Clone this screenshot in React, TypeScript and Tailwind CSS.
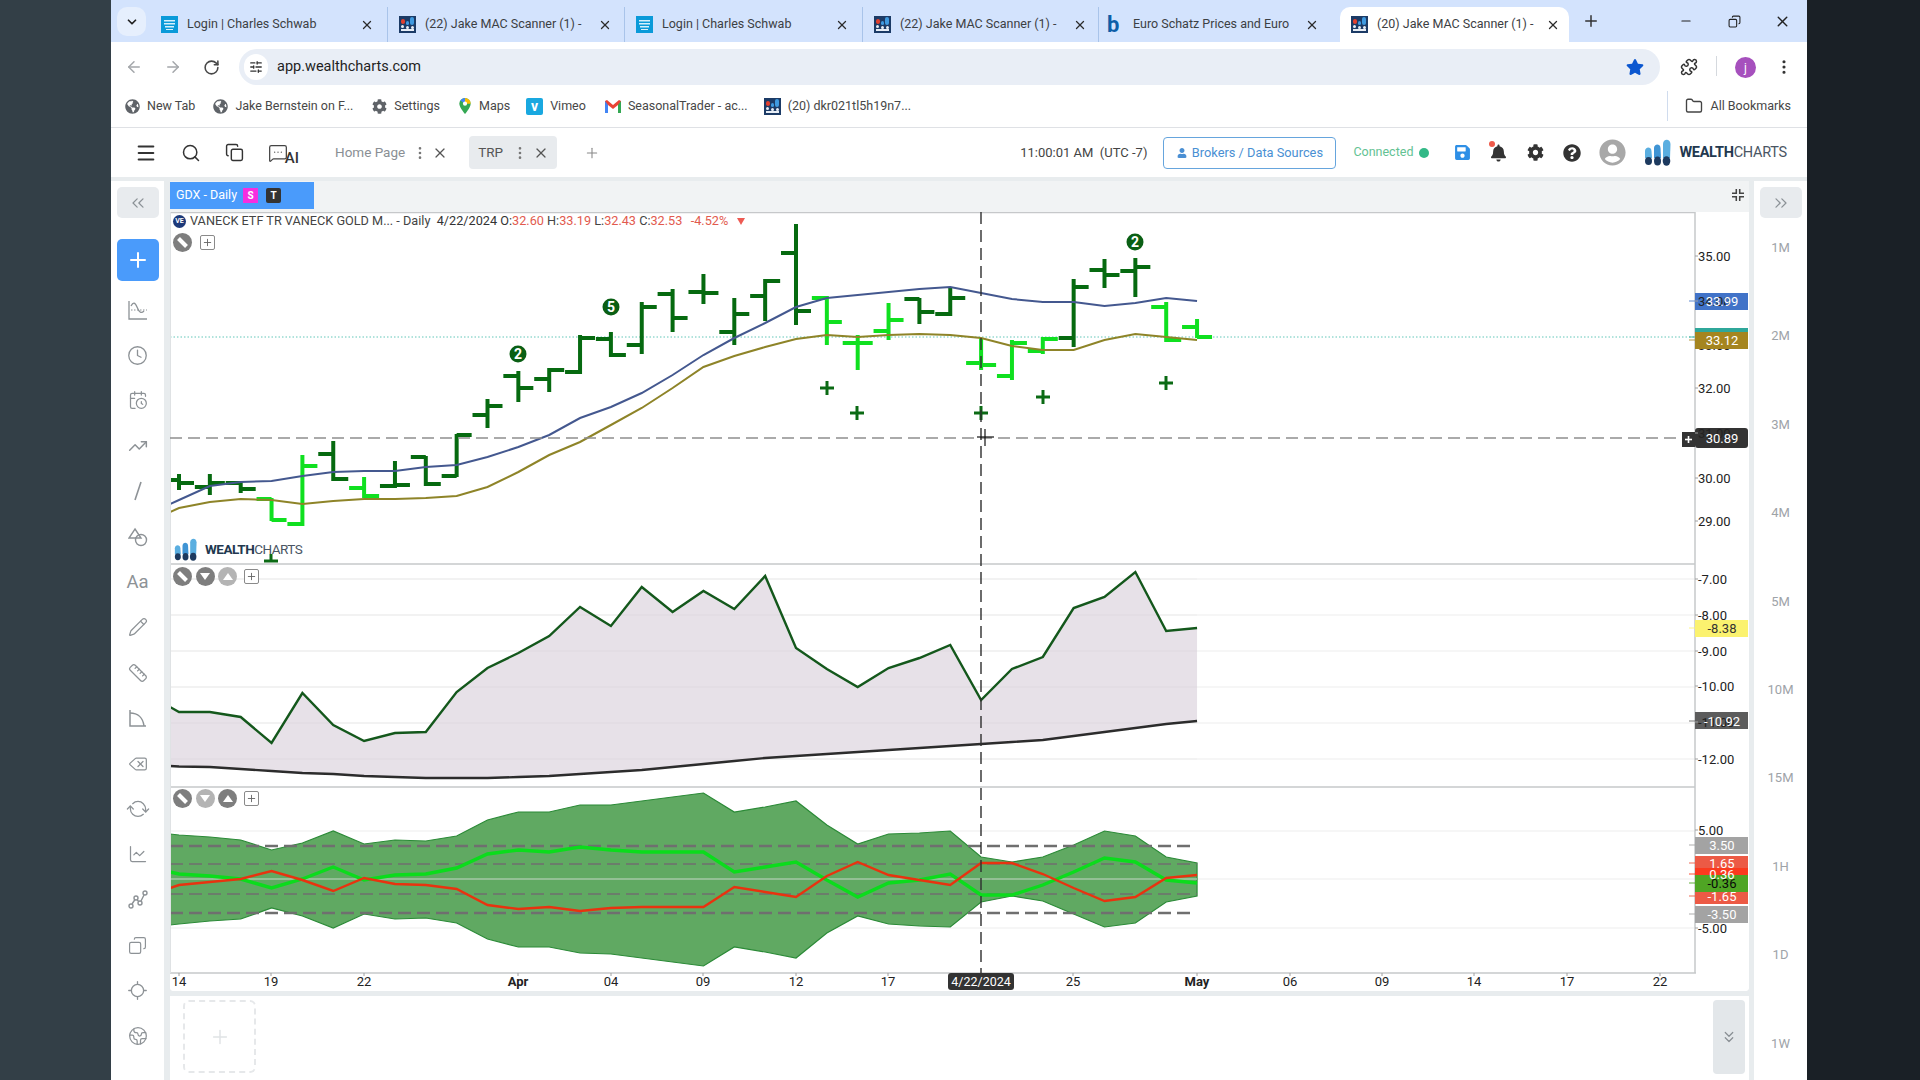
import {
  ArrowLeft,
  ArrowRight,
  CalendarClock,
  ChartLine,
  ChevronDown,
  ChevronsDown,
  ChevronsLeft,
  ChevronsRight,
  Clock,
  Copy,
  Delete,
  EllipsisVertical,
  Earth,
  Folder,
  Locate,
  Menu,
  MessageSquareMore,
  Minus,
  Pencil,
  Plus,
  Puzzle,
  RefreshCw,
  RotateCw,
  Ruler,
  Search,
  SlidersHorizontal,
  TrendingUp,
  X,
} from "lucide-react";
import { FaBell, FaCog, FaGlobeAmericas, FaQuestionCircle, FaSave, FaStar, FaUser, FaUserCircle } from "react-icons/fa";

const font = { fontFamily: '"Roboto", "Liberation Sans", sans-serif' };

const barX = (i: number) => 179 + 30.85 * i;

// high, low, open, close in page pixels, then 1 for a light bar
const bars: [number, number, number, number, number][] = [
  [474, 490, 480, 483, 0], [474, 495, 487, 483, 0], [482, 493, 483, 489, 0], [498, 521, 499, 520, 1],
  [455, 526, 524, 466, 1], [441, 481, 454, 479, 0], [477, 498, 488, 496, 1], [461, 488, 486, 485, 0],
  [456, 486, 457, 484, 0], [434, 477, 476, 435, 0], [399, 428, 415, 406, 0], [371, 402, 376, 388, 0],
  [368, 392, 379, 370, 0], [335, 374, 372, 338, 0], [332, 357, 339, 355, 0], [302, 354, 345, 307, 0],
  [289, 332, 294, 318, 0], [274, 304, 292, 293, 0], [298, 345, 332, 314, 0], [279, 321, 296, 281, 0],
  [224, 325, 253, 311, 0], [296, 345, 298, 322, 1], [335, 370, 343, 343, 1], [303, 340, 331, 320, 1],
  [298, 324, 299, 312, 0], [287, 316, 314, 298, 0], [338, 370, 363, 365, 1], [340, 380, 376, 343, 1],
  [337, 354, 351, 339, 1], [279, 347, 338, 287, 0], [259, 288, 270, 275, 0], [258, 297, 271, 267, 0],
  [302, 342, 307, 340, 1], [319, 338, 327, 337, 1],
];

const blueLine = [504, 500, 486, 482, 481, 476, 472, 471, 471, 467, 465, 457, 447, 435, 418, 407, 393, 375, 355, 338, 323, 307, 298, 295, 292, 289, 287, 293, 299, 302, 302, 306, 303, 298, 301];
const goldLine = [512, 508, 502, 499, 500, 504, 501, 499, 499, 498, 496, 487, 472, 455, 442, 425, 408, 388, 367, 356, 347, 339, 335, 337, 335, 334, 335, 338, 346, 350, 350, 340, 334, 337, 340];
const macdLine = [707, 712, 712, 717, 743, 693, 725, 741, 733, 732, 692, 668, 653, 636, 607, 626, 587, 612, 591, 609, 576, 648, 669, 687, 668, 658, 645, 700, 669, 657, 608, 597, 572, 631, 628];
const slowLine = [766, 766.5, 767, 769, 771, 773, 774, 776, 777, 778, 778, 778, 777, 776, 774, 772, 770, 767, 764, 761, 758, 756, 754, 752, 750, 748, 746, 744, 742, 740, 736, 732, 728, 724, 721];
const bandTop = [834, 835, 837, 840, 850, 843, 831, 844, 840, 841, 836, 820, 812, 812, 805, 805, 801, 797, 793, 812, 807, 801, 825, 844, 834, 833, 831, 857, 862, 857, 845, 831, 836, 857, 863];
const bandBottom = [925, 924, 921, 919, 908, 916, 928, 914, 919, 918, 923, 939, 947, 947, 953, 954, 958, 962, 966, 947, 952, 958, 933, 916, 924, 926, 927, 902, 896, 901, 914, 927, 923, 902, 896];
const greenLine = [872, 874, 876, 879, 888, 879, 867, 880, 875, 874, 868, 854, 850, 852, 847, 850, 852, 852, 852, 872, 867, 862, 880, 897, 883, 880, 874, 895, 895, 885, 872, 858, 862, 880, 883];
const redLine = [888, 885, 882, 879, 871, 880, 891, 878, 884, 885, 889, 905, 909, 907, 911, 908, 907, 907, 907, 887, 892, 897, 876, 862, 875, 880, 885, 863, 863, 874, 888, 901, 897, 878, 875];

// first value of each series sits on the left edge of the plot
const toPoints = (values: number[]) =>
  values.map((y, i) => `${i === 0 ? 170 : barX(i - 1)},${y}`).join(" ");

const toArea = (top: number[], bottom: number[]) =>
  `${toPoints(top)} ${[...bottom].reverse().map((y, i) => {
    const idx = bottom.length - 1 - i;
    return `${idx === 0 ? 170 : barX(idx - 1)},${y}`;
  }).join(" ")}`;

const priceLabels = [
  ["35.00", 256], ["34.00", 301], ["32.00", 388], ["31.00", 433], ["30.00", 478], ["29.00", 521],
  ["-7.00", 579], ["-8.00", 615], ["-9.00", 651], ["-10.00", 686], ["-11.00", 722], ["-12.00", 759],
  ["5.00", 830], ["-5.00", 928],
] as const;

const gridLines = [579, 615, 651, 687, 723, 759, 831, 879, 928];

const timeLabels = [
  ["14", 179], ["19", 271], ["22", 364], ["Apr", 518], ["04", 611], ["09", 703], ["12", 796], ["17", 888],
  ["25", 1073], ["May", 1197], ["06", 1290], ["09", 1382], ["14", 1474], ["17", 1567], ["22", 1660],
] as const;

const plusMarks = [[827, 388], [857, 413], [981, 413], [1043, 397], [1166, 383]];
const countMarks = [[518, 354, "2"], [611, 307, "5"], [1135, 242, "2"]] as const;

const valueBadges = [
  { y: 293, h: 17, fill: "#4173c8", text: "33.99", color: "#ffffff", cy: 301 },
  { y: 328, h: 6, fill: "#2fa79a", text: "", color: "#ffffff", cy: 337 },
  { y: 332, h: 17, fill: "#a5851f", text: "33.12", color: "#ffffff", cy: 340 },
  { y: 620, h: 17, fill: "#fbf26f", text: "-8.38", color: "#333333", cy: 628 },
  { y: 712, h: 17, fill: "#5c5c5c", text: "-10.92", color: "#ffffff", cy: 721 },
  { y: 837, h: 17, fill: "#a3a3a3", text: "3.50", color: "#ffffff", cy: 845 },
  { y: 856, h: 12, fill: "#ec5a45", text: "1.65", color: "#ffffff", cy: 863 },
  { y: 868, h: 7, fill: "#fb3a1e", text: "0.36", color: "#ffffff", cy: 874 },
  { y: 892, h: 12, fill: "#ec5a45", text: "-1.65", color: "#ffffff", cy: 896 },
  { y: 875, h: 17, fill: "#4fa524", text: "-0.36", color: "#0a0a0a", cy: 883 },
  { y: 906, h: 17, fill: "#a3a3a3", text: "-3.50", color: "#ffffff", cy: 914 },
];

function ChromeFavicon() {
  return (
    <svg viewBox="0 0 17 17" className="h-[17px] w-[17px] shrink-0">
      <rect width="17" height="17" fill="#1c3b66" />
      <rect x="2" y="9" width="3" height="3" rx="1.5" fill="#e8eef6" />
      <rect x="7" y="10" width="3" height="3" rx="1.5" fill="#e8eef6" />
      <rect x="12" y="10" width="3" height="3" rx="1.5" fill="#e8eef6" />
      <rect x="2" y="3" width="4" height="5" rx="2" fill="#e2402f" />
      <rect x="7" y="5" width="3" height="4" rx="1.5" fill="#3f9ae0" />
      <rect x="11" y="1" width="4" height="8" rx="2" fill="#3f9ae0" />
      <rect x="2" y="13" width="13" height="2" fill="#e8eef6" />
    </svg>
  );
}

function SchwabFavicon() {
  return (
    <svg viewBox="0 0 17 17" className="h-[17px] w-[17px] shrink-0">
      <rect width="17" height="17" fill="#0a9ad9" />
      <rect x="3" y="4" width="11" height="1.5" fill="#d7f0fb" />
      <rect x="3" y="7" width="11" height="1.5" fill="#d7f0fb" />
      <rect x="4" y="10" width="9" height="1.5" fill="#d7f0fb" />
      <rect x="5" y="13" width="7" height="1" fill="#d7f0fb" />
    </svg>
  );
}

function WealthLogo({ className }: { className: string }) {
  return (
    <svg viewBox="0 0 27 27" className={className}>
      <path d="M1 12c0-4 6-5 6.500 0l.5 7H1z" fill="#5aaee0" />
      <path d="M10 9c0-4 6-5 6.500 0l.5 10h-7z" fill="#3f94d4" />
      <path d="M19 5c0-5 7-6 7.500 0l-.5 14h-7z" fill="#5aaee0" />
      <ellipse cx="4.500" cy="22" rx="3.500" ry="4" fill="#1d3a5f" />
      <ellipse cx="13.500" cy="22" rx="3.500" ry="4.500" fill="#1d3a5f" />
      <ellipse cx="22.500" cy="22" rx="3.800" ry="4.800" fill="#1d3a5f" />
    </svg>
  );
}

function BrowserTab({
  icon,
  title,
  width,
  textWidth,
  active,
  divider = true,
}: {
  icon: React.ReactNode;
  title: string;
  width: string;
  textWidth: string;
  active?: boolean;
  divider?: boolean;
}) {
  return (
    <div
      className={`flex h-[35px] shrink-0 items-center pl-[11px] ${width} ${
        active ? "rounded-t-[10px] bg-white" : ""
      } ${divider ? "border-r border-[#a9c4ea]" : ""}`}
    >
      {icon}
      <div className={`ml-[9px] whitespace-nowrap text-[12.5px] text-[#3c4043] ${textWidth}`}>{title}</div>
      <X className="ml-[1px] h-[14px] w-[14px] shrink-0 text-[#2b2b2b]" strokeWidth={2.2} />
    </div>
  );
}

function Bookmark({ icon, label, className }: { icon: React.ReactNode; label: string; className: string }) {
  return (
    <div className={`flex items-center whitespace-nowrap text-[12.5px] text-[#474747] ${className}`}>
      {icon}
      <span className="ml-[7px]">{label}</span>
    </div>
  );
}

function ToolIcon({ children }: { children: React.ReactNode }) {
  return <div className="flex h-[45.4px] w-full items-center justify-center text-[#8d9296]">{children}</div>;
}

function RoundButton({ kind, dim }: { kind: "ban" | "down" | "up"; dim?: boolean }) {
  return (
    <div className={`flex h-[19px] w-[19px] items-center justify-center rounded-full ${dim ? "bg-[#b4b4b4]" : "bg-[#7e7e7e]"}`}>
      {kind === "ban" && (
        <svg viewBox="0 0 19 19" className="h-[19px] w-[19px]">
          <line x1="5.500" y1="5.500" x2="13.500" y2="13.500" stroke="#ffffff" strokeWidth="4" />
        </svg>
      )}
      {kind === "down" && <div className="h-0 w-0 border-x-[5px] border-t-[7px] border-x-transparent border-t-white" />}
      {kind === "up" && <div className="h-0 w-0 border-x-[5px] border-b-[7px] border-x-transparent border-b-white" />}
    </div>
  );
}

function PlusBox() {
  return (
    <div className="flex h-[15px] w-[15px] items-center justify-center rounded-[2px] border border-[#8a8a8a] bg-white">
      <Plus className="h-[11px] w-[11px] text-[#666]" strokeWidth={2} />
    </div>
  );
}

function PaneButtons({ className, dimDown, dimUp }: { className: string; dimDown?: boolean; dimUp?: boolean }) {
  return (
    <div className={`absolute left-[3px] flex items-center gap-[3.5px] ${className}`}>
      <RoundButton kind="ban" />
      <RoundButton kind="down" dim={dimDown} />
      <RoundButton kind="up" dim={dimUp} />
      <div className="ml-[3px]">
        <PlusBox />
      </div>
    </div>
  );
}

function ChartDrawing() {
  return (
    <svg viewBox="170 212 1579 779" className="block h-[779px] w-[1579px]" style={font}>
      <rect x="170" y="212" width="1579" height="779" fill="#ffffff" />

      {gridLines.map((y) => (
        <line key={y} x1="170" x2="1695" y1={y} y2={y} stroke="#eeeeee" strokeWidth="1.2" />
      ))}

      {/* price pane */}
      <line x1="170" x2="1695" y1="337" y2="337" stroke="#62c6b8" strokeWidth="1" strokeDasharray="1.5 2" />
      {bars.map(([high, low, open, close, light], i) => {
        const x = barX(i);
        const color = light ? "#10e020" : "#066a10";
        return (
          <g key={i} stroke={color} strokeWidth="4">
            <line x1={x} x2={x} y1={high} y2={low} />
            <line x1={x - 15} x2={x} y1={open} y2={open} />
            <line x1={x} x2={x + 15} y1={close} y2={close} />
          </g>
        );
      })}
      <polyline points={toPoints(blueLine)} fill="none" stroke="#44588f" strokeWidth="2" />
      <polyline points={toPoints(goldLine)} fill="none" stroke="#8e8428" strokeWidth="2" />
      {plusMarks.map(([x, y]) => (
        <g key={`${x}-${y}`} stroke="#0b6a14" strokeWidth="3">
          <line x1={x - 7} x2={x + 7} y1={y} y2={y} />
          <line x1={x} x2={x} y1={y - 7} y2={y + 7} />
        </g>
      ))}
      {countMarks.map(([x, y, n]) => (
        <g key={`${x}-${y}`}>
          <circle cx={x} cy={y} r="8.5" fill="#0a5f14" />
          <text x={x} y={y + 5} textAnchor="middle" fontSize="14" fontWeight="700" fill="#ffffff">
            {n}
          </text>
        </g>
      ))}
      <g stroke="#0b6a14" strokeWidth="3">
        <line x1="271" x2="271" y1="554" y2="561" />
        <line x1="264" x2="278" y1="561" y2="561" />
      </g>

      {/* momentum pane */}
      <line x1="170" x2="1695" y1="564" y2="564" stroke="#c6c8ca" strokeWidth="1.5" />
      <polygon points={toArea(macdLine, slowLine)} fill="#e7e1e8" />
      {gridLines.slice(0, 6).map((y) => (
        <line key={y} x1="170" x2="1197" y1={y} y2={y} stroke="#000000" strokeOpacity="0.03" strokeWidth="1.2" />
      ))}
      <polyline points={toPoints(macdLine)} fill="none" stroke="#14581c" strokeWidth="2.4" />
      <polyline points={toPoints(slowLine)} fill="none" stroke="#2c2c2c" strokeWidth="2.4" />

      {/* band pane */}
      <line x1="170" x2="1695" y1="787" y2="787" stroke="#c6c8ca" strokeWidth="1.5" />
      <polygon points={toArea(bandTop, bandBottom)} fill="#60a962" stroke="#2b8a37" strokeWidth="1.2" />
      <line x1="170" x2="1197" y1="879" y2="879" stroke="#a5c8a7" strokeWidth="1.4" />
      <line x1="170" x2="1194" y1="846" y2="846" stroke="#6f6f6f" strokeWidth="2.6" strokeDasharray="13 6" />
      <line x1="170" x2="1194" y1="913" y2="913" stroke="#6f6f6f" strokeWidth="2.6" strokeDasharray="13 6" />
      <line x1="170" x2="1197" y1="864" y2="864" stroke="#6f6f6f" strokeWidth="1.4" strokeDasharray="13 6" />
      <line x1="170" x2="1197" y1="894" y2="894" stroke="#6f6f6f" strokeWidth="1.4" strokeDasharray="13 6" />
      <polyline points={toPoints(greenLine)} fill="none" stroke="#0bdc1c" strokeWidth="3.4" />
      <polyline points={toPoints(redLine)} fill="none" stroke="#e8330f" strokeWidth="2.4" />

      {/* frame */}
      <line x1="170" x2="1695" y1="212.5" y2="212.5" stroke="#c6c8ca" strokeWidth="1.5" />
      <line x1="170" x2="1696" y1="973" y2="973" stroke="#c6c8ca" strokeWidth="1.5" />
      <line x1="1695" x2="1695" y1="212" y2="973" stroke="#c6c8ca" strokeWidth="1.5" />
      <line x1="170.5" x2="170.5" y1="212" y2="973" stroke="#dfe2e4" strokeWidth="1" />

      {/* crosshair */}
      <line x1="170" x2="1682" y1="438" y2="438" stroke="#8f8f8f" strokeWidth="1.6" strokeDasharray="12 6" />
      <line x1="981" x2="981" y1="212" y2="973" stroke="#2e2e2e" strokeWidth="1.4" strokeDasharray="12 6" />
      <g stroke="#111111" strokeWidth="1.2">
        <line x1="977" x2="994" y1="437" y2="437" />
        <line x1="985" x2="985" y1="429" y2="446" />
      </g>

      {/* axis: 33.00 lies under the gold badge, the other labels show through theirs */}
      <text x="1698" y="350" fontSize="13" fill="#222222">
        33.00
      </text>
      {valueBadges.map((b) => (
        <g key={`${b.y}`}>
          <line x1="1689" x2="1695" y1={b.cy} y2={b.cy} stroke={b.fill} strokeOpacity="0.6" strokeWidth="1.4" />
          <rect x="1695" y={b.y} width="53" height={b.h} fill={b.fill} />
        </g>
      ))}
      <rect x="1695" y="428" width="53" height="20" rx="3" fill="#333333" />
      {priceLabels.map(([text, y]) => (
        <g key={text}>
          <line x1="1695" x2="1698" y1={y} y2={y} stroke="#a0a0a0" strokeWidth="1" />
          <text x="1698" y={y + 5} fontSize="13" fill="#222222">
            {text}
          </text>
        </g>
      ))}
      {valueBadges.map(
        (b) =>
          b.text && (
            <text key={b.text} x="1722" y={b.cy + 5} textAnchor="middle" fontSize="13" fill={b.color}>
              {b.text}
            </text>
          ),
      )}
      <text x="1722" y="443" textAnchor="middle" fontSize="13" fill="#ffffff">
        30.89
      </text>
      <rect x="1682" y="432" width="13" height="15" fill="#333333" />
      <g stroke="#ffffff" strokeWidth="1.6">
        <line x1="1685" x2="1692" y1="439.5" y2="439.5" />
        <line x1="1688.5" x2="1688.5" y1="436" y2="443" />
      </g>
      {timeLabels.map(([text, x]) => (
        <g key={`${text}-${x}`}>
          <line x1={x} x2={x} y1="973" y2="976" stroke="#a0a0a0" strokeWidth="1" />
          <text
            x={x}
            y="986"
            textAnchor="middle"
            fontSize="13"
            fontWeight={text === "Apr" || text === "May" ? 700 : 400}
            fill="#222222"
          >
            {text}
          </text>
        </g>
      ))}
      <rect x="948" y="973" width="66" height="17" rx="3" fill="#333333" />
      <text x="981" y="986" textAnchor="middle" fontSize="12.5" fill="#ffffff">
        4/22/2024
      </text>
    </svg>
  );
}

export default function App() {
  return (
    <div className="flex h-[1080px] w-[1920px] overflow-hidden bg-[#1a2026]" style={font}>
      <div className="w-[111px] shrink-0 bg-[#333f47]" />

      <div className="flex w-[1696px] shrink-0 flex-col bg-white">
        {/* tab strip */}
        <div className="flex h-[42px] shrink-0 items-end bg-[#d3e3fd]">
          <div className="mb-[6px] ml-[6px] mr-[4px] flex h-[29px] w-[29px] shrink-0 items-center justify-center rounded-[10px] bg-[#e6effd]">
            <ChevronDown className="h-[14px] w-[14px] text-[#222]" strokeWidth={3} />
          </div>
          <div className="flex">
            <BrowserTab icon={<SchwabFavicon />} title="Login | Charles Schwab" width="w-[238px]" textWidth="w-[172px]" />
            <BrowserTab icon={<ChromeFavicon />} title="(22) Jake MAC Scanner (1) -" width="w-[237px]" textWidth="w-[172px]" />
            <BrowserTab icon={<SchwabFavicon />} title="Login | Charles Schwab" width="w-[238px]" textWidth="w-[172px]" />
            <BrowserTab icon={<ChromeFavicon />} title="(22) Jake MAC Scanner (1) -" width="w-[236px]" textWidth="w-[172px]" />
            <BrowserTab
              icon={<span className="-ml-[3px] w-[17px] text-[22px] font-bold leading-none text-[#0d5ea8]">b</span>}
              title="Euro Schatz Prices and Euro"
              width="w-[241px]"
              textWidth="w-[171px]"
              divider={false}
            />
            <BrowserTab icon={<ChromeFavicon />} title="(20) Jake MAC Scanner (1) -" width="w-[229px]" textWidth="w-[168px]" active divider={false} />
          </div>
          <div className="mb-[6px] flex h-[30px] flex-1 items-center">
            <Plus className="ml-[13px] h-[18px] w-[18px] text-[#333]" strokeWidth={2} />
            <Minus className="ml-[79px] h-[14px] w-[14px] text-[#222]" strokeWidth={2} />
            <Copy className="ml-[35px] h-[13px] w-[13px] -scale-x-100 text-[#222]" strokeWidth={2} />
            <X className="ml-[33px] h-[17px] w-[17px] text-[#222]" strokeWidth={2} />
          </div>
        </div>

        {/* address bar */}
        <div className="flex h-[43px] shrink-0 items-end">
          <ArrowLeft className="mb-[9px] ml-[14px] h-[18px] w-[18px] text-[#a4a7ab]" strokeWidth={2} />
          <ArrowRight className="mb-[9px] ml-[21px] h-[18px] w-[18px] text-[#a4a7ab]" strokeWidth={2} />
          <RotateCw className="mb-[9px] ml-[21px] h-[17px] w-[17px] text-[#474747]" strokeWidth={2.2} />
          <div className="ml-[19px] flex h-[36px] w-[1421px] items-center rounded-full bg-[#e9eef6]">
            <div className="ml-[5px] flex h-[26px] w-[24px] items-center justify-center rounded-full bg-white">
              <SlidersHorizontal className="h-[14px] w-[14px] text-[#333]" strokeWidth={2.2} />
            </div>
            <span className="ml-[9px] text-[14.5px] text-[#1f1f1f]">app.wealthcharts.com</span>
            <FaStar className="ml-auto mr-[16px] h-[18px] w-[18px] text-[#0b57d0]" />
          </div>
          <Puzzle className="mb-[9px] ml-[20px] h-[18px] w-[18px] text-[#333]" strokeWidth={2} />
          <div className="mb-[9px] ml-[18px] h-[20px] w-px bg-[#d5d9de]" />
          <div className="mb-[7px] ml-[18px] flex h-[21px] w-[21px] items-center justify-center rounded-full bg-[#a650bd] text-[12px] text-white">j</div>
          <EllipsisVertical className="mb-[9px] ml-[19px] h-[18px] w-[18px] text-[#333]" strokeWidth={2.2} />
        </div>

        {/* bookmarks */}
        <div className="flex h-[43px] shrink-0 items-center border-b border-[#dfe1e5]">
          <Bookmark className="ml-[14px]" icon={<FaGlobeAmericas className="h-[15px] w-[15px] text-[#5f6368]" />} label="New Tab" />
          <Bookmark className="ml-[18px]" icon={<FaGlobeAmericas className="h-[15px] w-[15px] text-[#5f6368]" />} label="Jake Bernstein on F..." />
          <Bookmark className="ml-[19px]" icon={<FaCog className="h-[15px] w-[15px] text-[#5f6368]" />} label="Settings" />
          <Bookmark
            className="ml-[18px]"
            icon={
              <svg viewBox="0 0 14 18" className="h-[17px] w-[14px]">
                <path d="M7 0a6 6 0 0 0-6 6c0 4 6 11 6 11s6-7 6-11a6 6 0 0 0-6-6z" fill="#34a853" />
                <path d="M7 0a6 6 0 0 0-5 2.600l5 3.400z" fill="#4285f4" />
                <path d="M7 0a6 6 0 0 1 6 6H7z" fill="#fbbc04" />
                <circle cx="7" cy="6" r="2.200" fill="#ffffff" />
              </svg>
            }
            label="Maps"
          />
          <Bookmark
            className="ml-[16px]"
            icon={<span className="flex h-[17px] w-[17px] items-center justify-center rounded-[2px] bg-[#19a8e0] text-[14px] font-bold text-white">v</span>}
            label="Vimeo"
          />
          <Bookmark
            className="ml-[19px]"
            icon={
              <svg viewBox="0 0 16 13" className="h-[13px] w-[16px]">
                <path d="M0 1v12h3V5l5 4 5-4v8h3V1l-2-1-6 5-6-5z" fill="#ea4335" />
                <path d="M0 1v12h3V5z" fill="#4285f4" />
                <path d="M13 5v8h3V1z" fill="#34a853" />
              </svg>
            }
            label="SeasonalTrader - ac..."
          />
          <Bookmark className="ml-[16px]" icon={<ChromeFavicon />} label="(20) dkr021tl5h19n7..." />
          <div className="ml-auto mr-[16px] flex items-center text-[12.5px] text-[#474747]">
            <div className="mr-[17px] h-[30px] w-px bg-[#d0dcee]" />
            <Folder className="mr-[8px] h-[18px] w-[18px] text-[#444]" strokeWidth={1.8} />
            All Bookmarks
          </div>
        </div>

        {/* app header */}
        <div className="flex h-[49px] shrink-0 items-center bg-white">
          <Menu className="ml-[24px] h-[22px] w-[22px] text-[#333]" strokeWidth={2.2} />
          <Search className="ml-[24px] h-[20px] w-[20px] text-[#333]" strokeWidth={1.8} />
          <Copy className="ml-[24px] h-[19px] w-[19px] text-[#333]" strokeWidth={1.8} />
          <div className="relative ml-[24px] h-[30px] w-[34px]">
            <MessageSquareMore className="mt-[5px] h-[20px] w-[20px] text-[#444]" strokeWidth={1.5} />
            <span className="absolute bottom-[2px] right-[3px] text-[15px] font-medium leading-none text-[#333]">AI</span>
          </div>
          <span className="ml-[33px] text-[13.5px] text-[#8a8f94]">Home Page</span>
          <EllipsisVertical className="ml-[7px] h-[16px] w-[16px] text-[#777]" strokeWidth={2} />
          <X className="ml-[4px] h-[16px] w-[16px] text-[#555]" strokeWidth={1.8} />
          <div className="ml-[21px] flex h-[33px] w-[88px] items-center rounded-[4px] bg-[#e8ebee] pl-[9px]">
            <span className="text-[13.5px] text-[#555]">TRP</span>
            <EllipsisVertical className="ml-[9px] h-[16px] w-[16px] text-[#777]" strokeWidth={2} />
            <X className="ml-[5px] h-[16px] w-[16px] text-[#555]" strokeWidth={1.8} />
          </div>
          <Plus className="ml-[27px] h-[16px] w-[16px] text-[#888]" strokeWidth={1.6} />
          <span className="ml-[420px] whitespace-pre text-[13px] text-[#444]">11:00:01 AM  (UTC -7)</span>
          <div className="ml-[16px] flex h-[32px] w-[173px] items-center justify-center rounded-[4px] border border-[#66a5dd] text-[12.8px] text-[#4a8fd3]">
            <FaUser className="mr-[5px] h-[10px] w-[10px]" />
            Brokers / Data Sources
          </div>
          <span className="ml-[17px] text-[12.5px] text-[#63c293]">Connected</span>
          <span className="ml-[6px] h-[10px] w-[10px] rounded-full bg-[#33b987]" />
          <FaSave className="ml-[26px] h-[17px] w-[15px] text-[#2e8fe6]" />
          <div className="relative ml-[21px]">
            <FaBell className="h-[18px] w-[15px] text-[#333]" />
            <span className="absolute -left-[2px] -top-[3px] h-[6px] w-[6px] rounded-full bg-[#ef5a4a]" />
          </div>
          <FaCog className="ml-[21px] h-[17px] w-[17px] text-[#333]" />
          <FaQuestionCircle className="ml-[19px] h-[18px] w-[18px] text-[#333]" />
          <FaUserCircle className="ml-[18px] h-[27px] w-[27px] text-[#a8a8a8]" />
          <WealthLogo className="ml-[18px] h-[27px] w-[27px]" />
          <span className="ml-[8px] text-[14.5px] tracking-[-0.3px] text-[#4a5563]">
            <span className="font-bold text-[#22384f]">WEALTH</span>CHARTS
          </span>
        </div>

        {/* workspace */}
        <div className="flex min-h-0 flex-1 bg-[#e8ecee] pt-[4px]">
          <div className="mr-[6px] flex w-[53px] shrink-0 flex-col items-center bg-white">
            <div className="mt-[6px] flex h-[31px] w-[42px] items-center justify-center rounded-[5px] bg-[#e8ebee] text-[#8b9196]">
              <ChevronsLeft className="h-[20px] w-[20px]" strokeWidth={1.5} />
            </div>
            <div className="mt-[21px] flex h-[42px] w-[42px] items-center justify-center rounded-[5px] bg-[#4a9bfb] text-white">
              <Plus className="h-[24px] w-[24px]" strokeWidth={2} />
            </div>
            <div className="mt-[6px] w-full">
              <ToolIcon>
                <svg viewBox="0 0 20 20" className="h-[20px] w-[20px]" fill="none" stroke="currentColor" strokeWidth="1.3">
                  <path d="M1 1v18h18" />
                  <path d="M3 6c2-4 4-4 6 1s4 7 7 4" />
                  <path d="M3 10h16" strokeDasharray="1.5 1.5" strokeWidth="1" />
                </svg>
              </ToolIcon>
              <ToolIcon>
                <Clock className="h-[21px] w-[21px]" strokeWidth={1.5} />
              </ToolIcon>
              <ToolIcon>
                <CalendarClock className="h-[20px] w-[20px]" strokeWidth={1.5} />
              </ToolIcon>
              <ToolIcon>
                <TrendingUp className="h-[20px] w-[20px]" strokeWidth={1.8} />
              </ToolIcon>
              <ToolIcon>
                <svg viewBox="0 0 20 20" className="h-[20px] w-[20px]" stroke="currentColor" strokeWidth="1.6">
                  <line x1="13" y1="1" x2="7" y2="19" />
                </svg>
              </ToolIcon>
              <ToolIcon>
                <svg viewBox="0 0 20 20" className="h-[20px] w-[20px]" fill="none" stroke="currentColor" strokeWidth="1.4">
                  <path d="M7 2l6 9H1z" />
                  <circle cx="13" cy="13" r="5.500" />
                </svg>
              </ToolIcon>
              <ToolIcon>
                <span className="text-[18.5px] leading-none">Aa</span>
              </ToolIcon>
              <ToolIcon>
                <Pencil className="h-[20px] w-[20px]" strokeWidth={1.5} />
              </ToolIcon>
              <ToolIcon>
                <Ruler className="h-[20px] w-[20px]" strokeWidth={1.5} />
              </ToolIcon>
              <ToolIcon>
                <svg viewBox="0 0 20 20" className="h-[20px] w-[20px]" fill="none" stroke="currentColor" strokeWidth="1.5">
                  <path d="M2 2v16h16" />
                  <path d="M2 5c8 0 13 5 14 13" />
                </svg>
              </ToolIcon>
              <ToolIcon>
                <Delete className="h-[20px] w-[20px]" strokeWidth={1.5} />
              </ToolIcon>
              <ToolIcon>
                <RefreshCw className="h-[20px] w-[20px] rotate-45" strokeWidth={1.5} />
              </ToolIcon>
              <ToolIcon>
                <ChartLine className="h-[20px] w-[20px]" strokeWidth={1.5} />
              </ToolIcon>
              <ToolIcon>
                <svg viewBox="0 0 20 20" className="h-[20px] w-[20px]" fill="none" stroke="currentColor" strokeWidth="1.4">
                  <circle cx="3" cy="16" r="2" />
                  <circle cx="8" cy="8" r="2" />
                  <circle cx="12" cy="13" r="2" />
                  <circle cx="17" cy="3" r="2" />
                  <path d="M4 14l3-4.500M9 10l2 1.500M13 11l3-6" />
                </svg>
              </ToolIcon>
              <ToolIcon>
                <Copy className="h-[19px] w-[19px] -scale-x-100" strokeWidth={1.5} />
              </ToolIcon>
              <ToolIcon>
                <Locate className="h-[21px] w-[21px]" strokeWidth={1.5} />
              </ToolIcon>
              <ToolIcon>
                <Earth className="h-[20px] w-[20px]" strokeWidth={1.5} />
              </ToolIcon>
            </div>
          </div>

          <div className="flex min-w-0 flex-1 flex-col gap-[5px]">
            <div className="relative h-[810px] shrink-0 overflow-hidden rounded-b-[4px] bg-white">
              <div className="flex h-[31px] items-start bg-[#f1f3f4] pt-[1px]">
                <div className="flex h-[27px] w-[144px] items-center bg-[#4a9bfb] pl-[6px] text-[12.5px] text-white">
                  GDX - Daily
                  <span className="ml-[6px] flex h-[15px] w-[15px] items-center justify-center bg-[#f72ee0] text-[10px] font-bold">S</span>
                  <span className="ml-[8px] flex h-[15px] w-[15px] items-center justify-center rounded-[2px] bg-[#333] text-[10px] font-bold">T</span>
                </div>
                <svg viewBox="0 0 14 14" className="ml-auto mr-[5px] mt-[7px] h-[12px] w-[12px]" fill="none" stroke="#444" strokeWidth="1.8">
                  <path d="M5 0v5H0M9 0v5h5M5 14V9H0M9 14V9h5" />
                </svg>
              </div>
              <ChartDrawing />

              {/* chart legend sits on top of the plot */}
              <div className="absolute left-[3px] top-[32px] flex h-[16px] items-center whitespace-pre text-[12.7px] text-[#444]">
                <span className="mr-[4px] flex h-[13px] w-[13px] items-center justify-center rounded-full bg-[#1d3a7a] text-[7px] font-bold text-white">VE</span>
                VANECK ETF TR VANECK GOLD M... - Daily  <span className="text-[#333]">4/22/2024 O:</span>
                <span className="text-[#e25a4e]">32.60</span> H:<span className="text-[#e25a4e]">33.19</span> L:
                <span className="text-[#e25a4e]">32.43</span> C:<span className="text-[#e25a4e]">32.53</span>
                <span className="ml-[2px] text-[#e25a4e]">  -4.52%</span>
                <span className="ml-[9px] h-0 w-0 border-x-[4px] border-t-[7px] border-x-transparent border-t-[#ee5a52]" />
              </div>
              <div className="absolute left-[3px] top-[52px] flex items-center gap-[8px]">
                <RoundButton kind="ban" />
                <PlusBox />
              </div>
              <div className="absolute left-[3px] top-[357px] flex items-center">
                <WealthLogo className="h-[23px] w-[25px]" />
                <span className="ml-[7px] text-[13.5px] tracking-[-0.5px] text-[#4a5563]">
                  <span className="font-bold text-[#22384f]">WEALTH</span>CHARTS
                </span>
              </div>
              <PaneButtons className="top-[386px]" dimUp />
              <PaneButtons className="top-[608px]" dimDown />
            </div>

            <div className="flex min-h-0 flex-1 items-start bg-white pt-[4px]">
              <div className="ml-[13px] flex h-[73px] w-[73px] items-center justify-center rounded-[6px] border-2 border-dashed border-[#e6e8ea]">
                <Plus className="h-[22px] w-[22px] text-[#e0e3e5]" strokeWidth={1.6} />
              </div>
              <div className="ml-auto mr-[4px] flex h-[74px] w-[32px] items-center justify-center rounded-[4px] bg-[#e3e7ea]">
                <ChevronsDown className="h-[18px] w-[18px] text-[#888e93]" strokeWidth={1.6} />
              </div>
            </div>
          </div>

          <div className="ml-[5px] flex w-[53px] shrink-0 flex-col items-center bg-white">
            <div className="mt-[6px] flex h-[31px] w-[42px] items-center justify-center rounded-[5px] bg-[#e8ebee] text-[#8b9196]">
              <ChevronsRight className="h-[20px] w-[20px]" strokeWidth={1.5} />
            </div>
            <div className="mt-[20px] flex flex-col items-center gap-[68.4px] text-[13px] leading-[20px] text-[#9ea3a8]">
              {["1M", "2M", "3M", "4M", "5M", "10M", "15M", "1H", "1D", "1W"].map((item) => (
                <span key={item}>{item}</span>
              ))}
            </div>
          </div>
        </div>
      </div>

      <div className="flex-1 bg-[#1a2026]" />
    </div>
  );
}
